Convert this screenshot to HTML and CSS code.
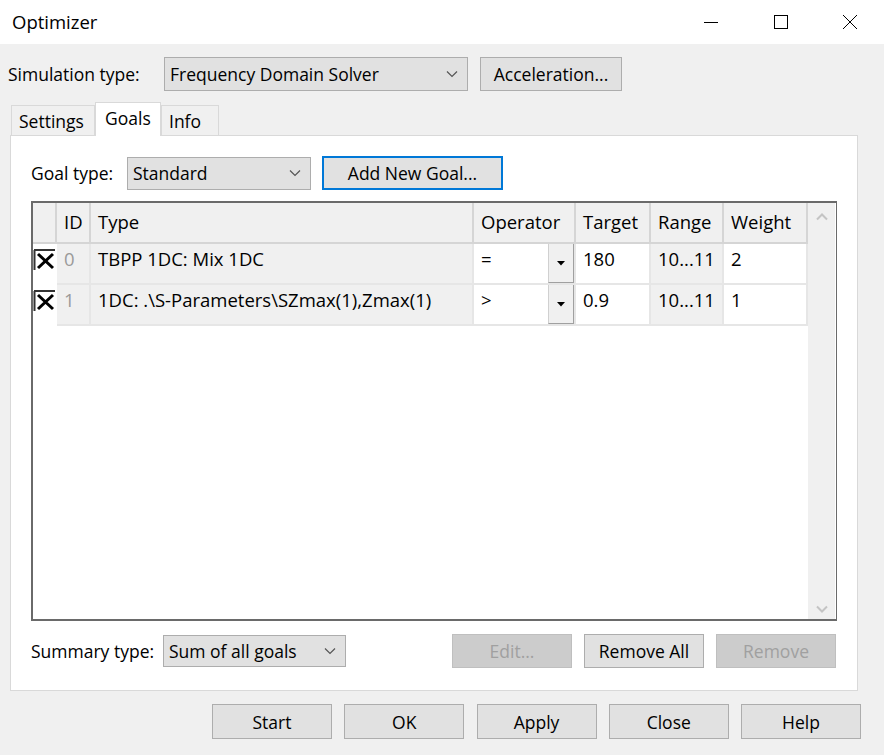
FILE: index.html
```html
<!DOCTYPE html>
<html>
<head>
<meta charset="utf-8">
<link rel="stylesheet" href="styles.css">
</head>
<body>
<div class="window">
  <div class="titlebar">
    <span class="title">Optimizer</span>
    <div class="winctl">
      <span class="ctl"><svg width="16" height="16" viewBox="0 0 16 16"><path d="M1 8.5H15" stroke="#000" stroke-width="1"/></svg></span>
      <span class="ctl"><svg width="16" height="16" viewBox="0 0 16 16"><rect x="1.5" y="1.5" width="13" height="13" fill="none" stroke="#000" stroke-width="1"/></svg></span>
      <span class="ctl"><svg width="16" height="16" viewBox="0 0 16 16"><path d="M1 1L15 15M15 1L1 15" stroke="#000" stroke-width="1"/></svg></span>
    </div>
  </div>
  <div class="body">
    <div class="simrow">
      <span class="label">Simulation type:</span>
      <div class="combo combo-sim"><span>Frequency Domain Solver</span><svg class="chev" width="12" height="8" viewBox="0 0 12 8"><path d="M1 1.5L6 6.5L11 1.5" fill="none" stroke="#555" stroke-width="1.2"/></svg></div>
      <div class="btn btn-accel">Acceleration...</div>
    </div>
    <div class="tabs">
      <div class="tab">Settings</div>
      <div class="tab active">Goals</div>
      <div class="tab">Info</div>
    </div>
    <div class="panel">
      <div class="goalrow">
        <span class="label">Goal type:</span>
        <div class="combo combo-goal"><span>Standard</span><svg class="chev" width="12" height="8" viewBox="0 0 12 8"><path d="M1 1.5L6 6.5L11 1.5" fill="none" stroke="#555" stroke-width="1.2"/></svg></div>
        <div class="btn btn-add">Add New Goal...</div>
      </div>
      <div class="grid">
        <div class="table">
          <div class="hrow">
            <div class="hc c-chk"></div>
            <div class="hc c-id">ID</div>
            <div class="hc c-type">Type</div>
            <div class="hc c-op">Operator</div>
            <div class="hc c-tg">Target</div>
            <div class="hc c-rg">Range</div>
            <div class="hc c-wt">Weight</div>
          </div>
          <div class="row">
            <div class="cell c-chk"><svg width="24" height="26" viewBox="0 0 24 26"><path d="M1 6H22M1.5 6V28" stroke="#333" stroke-width="2"/><path d="M5 10L20 24M20 10L5 24" stroke="#000" stroke-width="3"/></svg></div>
            <div class="cell c-id ro">0</div>
            <div class="cell c-type ro">TBPP 1DC: Mix 1DC</div>
            <div class="cell c-op"><span class="opv">=</span><span class="dd"><svg width="8" height="5" viewBox="0 0 8 5"><path d="M0 0H8L4 4.5Z" fill="#000"/></svg></span></div>
            <div class="cell c-tg">180</div>
            <div class="cell c-rg ro">10...11</div>
            <div class="cell c-wt">2</div>
          </div>
          <div class="row">
            <div class="cell c-chk"><svg width="24" height="26" viewBox="0 0 24 26"><path d="M1 6H22M1.5 6V28" stroke="#333" stroke-width="2"/><path d="M5 10L20 24M20 10L5 24" stroke="#000" stroke-width="3"/></svg></div>
            <div class="cell c-id ro">1</div>
            <div class="cell c-type ro">1DC: .\S-Parameters\SZmax(1),Zmax(1)</div>
            <div class="cell c-op"><span class="opv">&gt;</span><span class="dd"><svg width="8" height="5" viewBox="0 0 8 5"><path d="M0 0H8L4 4.5Z" fill="#000"/></svg></span></div>
            <div class="cell c-tg">0.9</div>
            <div class="cell c-rg ro">10...11</div>
            <div class="cell c-wt">1</div>
          </div>
        </div>
        <div class="vscroll">
          <svg width="12" height="8" viewBox="0 0 12 8"><path d="M1 6.5L6 1.5L11 6.5" fill="none" stroke="#c4c4c4" stroke-width="2"/></svg>
          <svg width="12" height="8" viewBox="0 0 12 8"><path d="M1 1.5L6 6.5L11 1.5" fill="none" stroke="#c4c4c4" stroke-width="2"/></svg>
        </div>
      </div>
      <div class="sumrow">
        <span class="label">Summary type:</span>
        <div class="combo combo-sum"><span>Sum of all goals</span><svg class="chev" width="12" height="8" viewBox="0 0 12 8"><path d="M1 1.5L6 6.5L11 1.5" fill="none" stroke="#555" stroke-width="1.2"/></svg></div>
        <div class="spacer"></div>
        <div class="btn btn-sm disabled">Edit...</div>
        <div class="btn btn-sm">Remove All</div>
        <div class="btn btn-sm disabled">Remove</div>
      </div>
    </div>
    <div class="footer">
      <div class="btn btn-ft">Start</div>
      <div class="btn btn-ft">OK</div>
      <div class="btn btn-ft">Apply</div>
      <div class="btn btn-ft">Close</div>
      <div class="btn btn-ft">Help</div>
    </div>
  </div>
</div>
</body>
</html>
```

FILE: styles.css
```css
* { box-sizing: border-box; }
html, body { margin: 0; padding: 0; }
body {
  width: 884px;
  height: 755px;
  background: #f0f0f0;
  font-family: "Open Sans", "Noto Sans", sans-serif;
  font-size: 17.5px;
  color: #000;
  overflow: hidden;
}
.window { width: 884px; height: 755px; display: flex; flex-direction: column; }
.titlebar {
  height: 44px;
  background: #fff;
  display: flex;
  align-items: center;
  justify-content: space-between;
  padding-left: 12px;
}
.title { font-size: 18.5px; color: #000; margin-top: -2px; }
.winctl { display: flex; height: 100%; }
.ctl { width: 70px; display: flex; align-items: center; justify-content: center; }
.ctl:last-child { width: 68px; }
.body { flex: 1; padding: 13px 26px 0 10px; display: flex; flex-direction: column; }
.simrow { display: flex; align-items: center; height: 34px; margin-left: -2px; }
.label { white-space: nowrap; }
.simrow .label { width: 156px; }
.combo {
  height: 34px;
  background: #e1e1e1;
  border: 1px solid #adadad;
  display: flex;
  align-items: center;
  justify-content: space-between;
  padding: 0 9px 0 5px;
}
.chev { flex: none; }
.combo-sim { width: 304px; }
.btn {
  height: 34px;
  background: #e1e1e1;
  border: 1px solid #adadad;
  display: flex;
  align-items: center;
  justify-content: center;
  white-space: nowrap;
}
.btn-accel { width: 142px; margin-left: 12px; }
.tabs { display: flex; align-items: flex-end; height: 34px; margin-top: 10px; margin-left: 1px; position: relative; z-index: 1; }
.tab {
  height: 30px;
  border: 1px solid #d9d9d9;
  border-bottom: none;
  background: #f0f0f0;
  padding: 1px 7px 0 7px;
  display: flex;
  align-items: center;
}
.tab:first-child { width: 84px; }
.tab.active { height: 34px; width: 66px; background: #fff; padding-left: 9px; padding-bottom: 4px; margin-bottom: -1px; }
.tab:last-child { width: 58px; }
.panel {
  width: 848px;
  height: 556px;
  background: #fff;
  border: 1px solid #d9d9d9;
  padding: 20px 21px 0 20px;
  display: flex;
  flex-direction: column;
}
.goalrow { display: flex; align-items: center; height: 34px; }
.goalrow .label { width: 96px; }
.combo-goal { width: 184px; height: 33px; }
.btn-add { width: 181px; margin-left: 11px; border: 2px solid #0078d7; height: 34px; }
.grid {
  margin-top: 11px;
  width: 806px;
  height: 420px;
  border: 2px solid #6a6a6a;
  border-right-width: 1px;
  display: flex;
  background: #fff;
  font-size: 18.5px;
}
.table { width: 775px; }
.hrow, .row { display: flex; }
.hrow { height: 41px; }
.row { height: 41px; }
.hc {
  background: #f0f0f0;
  border-right: 2px solid #d5d5d5;
  border-bottom: 2px solid #d5d5d5;
  display: flex;
  align-items: center;
  padding-left: 7px;
  padding-bottom: 3px;
}
.cell {
  border-right: 2px solid #e6e6e6;
  border-bottom: 2px solid #e6e6e6;
  display: flex;
  align-items: flex-start;
  padding-top: 2px;
  padding-left: 7px;
}
.ro { background: #f0f0f0; }
.c-chk { width: 24px; padding: 0; }
.cell.c-chk { padding: 0; align-items: flex-start; border-right: none; border-bottom-color: #fff; }
.c-id { width: 34px; }
.cell.c-id { color: #9a9a9a; }
.c-type { width: 383px; }
.c-op { width: 102px; }
.cell.c-op { padding-top: 0; justify-content: space-between; align-items: stretch; padding-right: 0; }
.opv { padding-top: 2px; }
.dd {
  width: 26px;
  background: #f0f0f0;
  border-left: 1px solid #d0d0d0;
  border-right: 1px solid #a0a0a0;
  border-bottom: 1px solid #a0a0a0;
  display: flex;
  align-items: center;
  justify-content: center;
}
.c-tg { width: 75px; }
.c-rg { width: 73px; }
.c-wt { width: 84px; }
.vscroll {
  width: 27px;
  background: #f0f0f0;
  display: flex;
  flex-direction: column;
  justify-content: space-between;
  align-items: center;
  padding: 10px 0 6px 0;
}
.sumrow { display: flex; align-items: center; margin-top: 12px; height: 35px; }
.sumrow .label { width: 132px; }
.combo-sum { width: 183px; height: 32px; }
.spacer { flex: 1; }
.btn-sm { width: 120px; margin-left: 12px; height: 34px; }
.btn.disabled { background: #cccccc; border-color: #bfbfbf; color: #a0a0a0; }
.footer { display: flex; justify-content: flex-end; gap: 12.25px; margin-top: 13px; margin-right: -3px; }
.btn-ft { width: 120px; height: 35px; }
```
